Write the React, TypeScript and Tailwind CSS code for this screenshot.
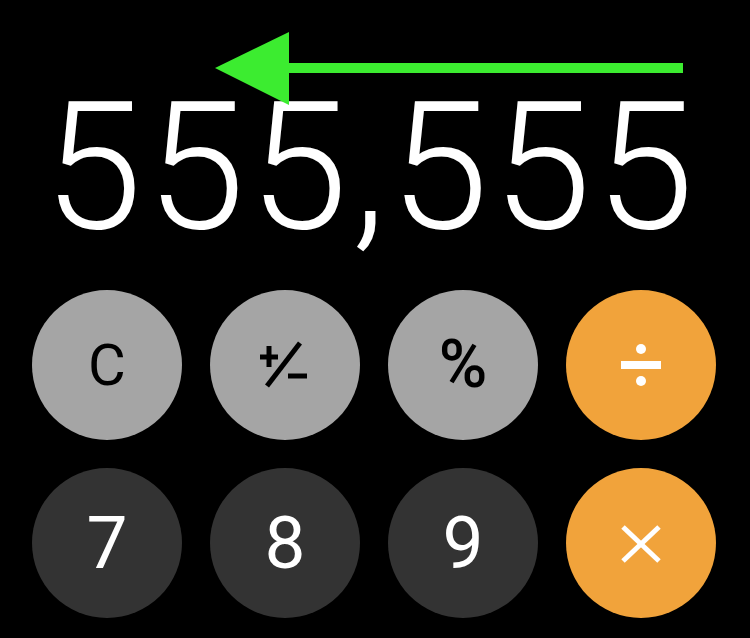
import React from 'react';

type Key = {
  id: string;
  bg: string;
  fg: string;
  content: React.ReactNode;
};

const digitFont = { fontFamily: 'Roboto, "Liberation Sans", sans-serif' };

function PlusMinus() {
  return (
    <svg width="150" height="150" viewBox="0 0 150 150">
      <g stroke="#000" strokeWidth="5" fill="none">
        <line x1="50" y1="67" x2="68" y2="67" />
        <line x1="59" y1="56" x2="59" y2="77" />
        <line x1="57" y1="96" x2="90" y2="53" />
        <line x1="78" y1="86" x2="97" y2="86" />
      </g>
    </svg>
  );
}

function Divide() {
  return (
    <svg width="150" height="150" viewBox="0 0 150 150">
      <g fill="#fff">
        <circle cx="75" cy="59" r="5" />
        <circle cx="75" cy="91" r="5" />
        <rect x="55" y="71" width="40" height="8" />
      </g>
    </svg>
  );
}

function Times() {
  return (
    <svg width="150" height="150" viewBox="0 0 150 150">
      <g stroke="#fff" strokeWidth="5">
        <line x1="57" y1="59" x2="93" y2="93" />
        <line x1="93" y1="59" x2="57" y2="93" />
      </g>
    </svg>
  );
}

const keys: Key[] = [
  { id: 'c', bg: 'bg-[#a5a5a5]', fg: 'text-black', content: <span className="text-[58px] leading-none">C</span> },
  { id: 'pm', bg: 'bg-[#a5a5a5]', fg: 'text-black', content: <PlusMinus /> },
  { id: 'pct', bg: 'bg-[#a5a5a5]', fg: 'text-black', content: <span className="text-[66px] leading-none font-medium">%</span> },
  { id: 'div', bg: 'bg-[#f1a33b]', fg: 'text-white', content: <Divide /> },
  { id: '7', bg: 'bg-[#333333]', fg: 'text-white', content: <span className="text-[73px] leading-none">7</span> },
  { id: '8', bg: 'bg-[#333333]', fg: 'text-white', content: <span className="text-[73px] leading-none">8</span> },
  { id: '9', bg: 'bg-[#333333]', fg: 'text-white', content: <span className="text-[73px] leading-none">9</span> },
  { id: 'mul', bg: 'bg-[#f1a33b]', fg: 'text-white', content: <Times /> },
];

export default function App() {
  return (
    <div className="relative w-[750px] h-[638px] bg-black overflow-hidden" style={digitFont}>
      {/* display */}
      <div className="h-[290px] flex justify-end pr-[52px] pt-[78px]">
        <span className="text-[178px] leading-none font-light text-white tracking-[4px]">555,555</span>
      </div>

      {/* keypad */}
      <div className="grid grid-cols-[repeat(4,150px)] gap-[28px] pl-[32px]">
        {keys.map((k) => (
          <div
            key={k.id}
            className={`w-[150px] h-[150px] rounded-full flex items-center justify-center ${k.bg} ${k.fg}`}
          >
            {k.content}
          </div>
        ))}
      </div>

      {/* annotation arrow */}
      <svg className="absolute left-0 top-0" width="750" height="120" viewBox="0 0 750 120">
        <rect x="285" y="63" width="398" height="10" fill="#3cec30" />
        <polygon points="215,68 289,32 289,105" fill="#3cec30" />
      </svg>
    </div>
  );
}
